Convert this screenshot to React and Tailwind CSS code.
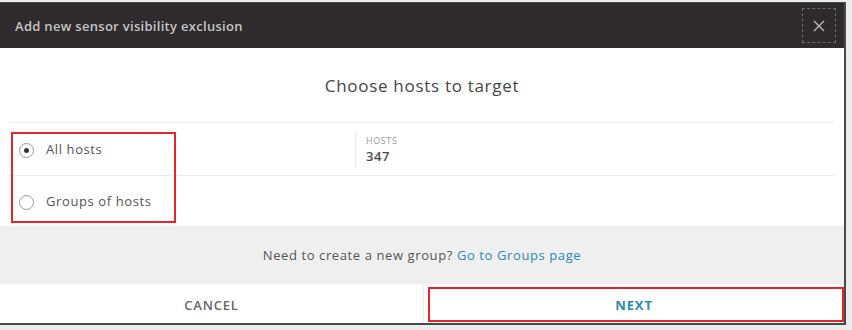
import { useState } from 'react';

const Radio = ({ checked }) => (
  <span className="flex h-[15px] w-[15px] shrink-0 items-center justify-center rounded-full border border-[#9a9a9a] bg-white">
    {checked && <span className="h-[5px] w-[5px] rounded-full bg-[#333]"></span>}
  </span>
);

const App = () => {
  const [target, setTarget] = useState('all');

  return (
    <div
      className="h-[330px] w-[852px] overflow-hidden bg-[#ececec] pt-[2px]"
      style={{ fontFamily: '"Open Sans", "Liberation Sans", sans-serif' }}
    >
      <div className="relative w-[846px] border-t border-r-2 border-b-2 border-[#4a4a4a] bg-white">
        {/* Header */}
        <div className="flex h-[45px] items-center justify-between bg-[#2e2a2d] pl-[15px] pr-[8px]">
          <h1 className="pt-[3px] text-[13px] font-semibold tracking-[0.3px] text-[#c4c4c4]">
            Add new sensor visibility exclusion
          </h1>
          <button className="flex h-[35px] w-[34px] items-center justify-center border border-dashed border-[#6f6b6e] text-[#b8b8b8]">
            <svg width="14" height="14" viewBox="0 0 14 14" fill="none" stroke="currentColor" strokeWidth="1.4">
              <path d="M2 2 L12 12 M12 2 L2 12" />
            </svg>
          </button>
        </div>

        {/* Title */}
        <div className="flex h-[74px] items-center justify-center pt-[2px]">
          <h2 className="text-[17px] tracking-[0.7px] text-[#454545]">Choose hosts to target</h2>
        </div>

        {/* Options */}
        <div className="mx-[10px] border-t border-[#ececec]">
          <div className="flex h-[53px] items-center border-b border-[#ececec]">
            <button
              className="flex w-[345px] items-center gap-[12px] pl-[9px] pt-[2px] text-[13px] tracking-[0.6px] text-[#555]"
              onClick={() => setTarget('all')}
            >
              <Radio checked={target === 'all'} />
              All hosts
            </button>
            <div className="flex h-[37px] flex-col justify-center border-l border-[#ececec] pl-[10px] pt-[2px]">
              <div className="text-[9px] leading-[12px] tracking-[0.6px] text-[#9a9a9a]">HOSTS</div>
              <div className="text-[13px] font-semibold leading-[18px] tracking-[0.6px] text-[#4a4a4a]">347</div>
            </div>
          </div>
          <div className="flex h-[50px] items-center">
            <button
              className="flex items-center gap-[12px] pl-[9px] pt-[2px] text-[13px] tracking-[0.6px] text-[#555]"
              onClick={() => setTarget('groups')}
            >
              <Radio checked={target === 'groups'} />
              Groups of hosts
            </button>
          </div>
        </div>

        {/* Groups hint */}
        <div className="flex h-[58px] items-center justify-center bg-[#efefef] pt-[2px] text-[13px] tracking-[0.6px] text-[#555]">
          Need to create a new group?&nbsp;<a href="#" className="text-[#2b8db3]">Go to Groups page</a>
        </div>

        {/* Footer */}
        <div className="flex h-[39px]">
          <button className="flex w-[424px] items-center justify-center border-r border-[#ececec] pt-[4px] text-[13px] font-semibold tracking-[0.8px] text-[#666]">
            CANCEL
          </button>
          <button className="relative flex flex-1 items-center justify-center pt-[4px] text-[13px] font-bold tracking-[0.9px] text-[#2a8aab]">
            NEXT
            <span className="absolute top-[3px] right-0 bottom-[1px] left-[4px] border-2 border-[#e8232c]"></span>
          </button>
        </div>

        {/* Annotation box around the options */}
        <span className="absolute top-[129px] left-[11px] h-[91px] w-[165px] border-2 border-[#e8232c]"></span>
      </div>
    </div>
  );
};

export default App;
